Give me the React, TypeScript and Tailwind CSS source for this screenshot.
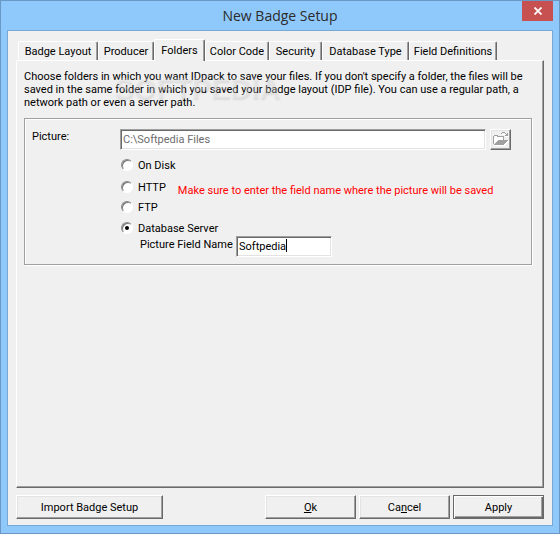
import { useState } from 'react'
import clsx from 'clsx'

const tabs = [
  { name: 'Badge Layout', width: 'w-[80px]' },
  { name: 'Producer', width: 'w-[56px]' },
  { name: 'Folders', width: 'w-[51px]' },
  { name: 'Color Code', width: 'w-[64px]' },
  { name: 'Security', width: 'w-[53px]' },
  { name: 'Database Type', width: 'w-[87px]' },
  { name: 'Field Definitions', width: 'w-[88px]' },
]

const raised =
  'border border-t-white border-l-white border-r-[#696969] border-b-[#696969] shadow-[inset_-1px_-1px_0_#a0a0a0,inset_1px_1px_0_#e3e3e3]'
const sunken =
  'bg-white border border-t-[#a0a0a0] border-l-[#a0a0a0] border-r-white border-b-white shadow-[inset_1px_1px_0_#696969,inset_-1px_-1px_0_#e3e3e3] outline-none'

function OpenFolderIcon() {
  return (
    <svg width="16" height="15" viewBox="0 0 16 15" shapeRendering="crispEdges" aria-hidden="true">
      <path d="M1 5h1V4h3v1h5v4H5v1H4v1H3v1H2v1H1z" fill="#fff" />
      <path d="M0 4h1V3h4v1h6v4h-1V5H4V4H1v8H0z" fill="#a0a0a0" />
      <path d="M5 8h10v1h-1v1h-1v1h-1v1h-1v1H1v-1h1v-1h1v-1h1V9h1z" fill="#a0a0a0" />
      <path d="M8 1h1V0h3v1h1v1h1V1h1v3h-3V3h1V2h-1V1H9v1H8z" fill="#a0a0a0" />
      <path d="M15 9h1v1h-1v1h-1v1h-1v1h-1v1H1v-1h10v-1h1v-1h1v-1h1V9zM9 2h3v1H9zM12 4h4v1h-4z" fill="#fff" />
    </svg>
  )
}

type RadioProps = {
  label: string
  value: string
  onChange: (value: string) => void
}

function SaveOption({ label, value, onChange }: RadioProps) {
  return (
    <label className="flex h-4 items-center gap-[5px]">
      <input
        type="radio"
        name="target"
        checked={value === label}
        onChange={() => onChange(label)}
        className="flex size-3 appearance-none items-center justify-center rounded-full border border-t-[#888] border-l-[#888] border-r-white border-b-white bg-white shadow-[inset_1px_1px_0_#777] checked:before:size-1 checked:before:rounded-full checked:before:bg-black"
      />
      <span>{label}</span>
    </label>
  )
}

export default function App() {
  const [active, setActive] = useState('Folders')
  const [target, setTarget] = useState('Database Server')
  const [field, setField] = useState('Softpedia')

  return (
    <div className="flex min-h-screen flex-col border border-[#6b98c4] bg-[#8fc8fb] px-[6px] pb-[7px] font-['Roboto','Liberation_Sans',sans-serif] text-[11px] leading-[13px] text-black">
      <header className="grid h-[29px] shrink-0 grid-cols-[1fr_auto_1fr]">
        <h1 className="col-start-2 self-center font-['Open_Sans','Noto_Sans',sans-serif] text-[14px] leading-5 text-[#2b2b2b]">
          New Badge Setup
        </h1>
        <button
          type="button"
          aria-label="Close"
          className="flex h-5 w-[31px] items-center justify-center justify-self-end bg-[#c75050]"
        >
          <svg width="8" height="8" viewBox="0 0 8 8" aria-hidden="true">
            <path d="M0.5 0.5l7 7M7.5 0.5l-7 7" stroke="#fff" strokeWidth="1.8" />
          </svg>
        </button>
      </header>

      <main className="flex grow flex-col border border-[#78a8d4] bg-[#f0f0f0] px-2 pt-2 pb-[6px]">
        <div role="tablist" className="flex items-end pl-[2px]">
          {tabs.map((tab) => (
            <button
              key={tab.name}
              type="button"
              role="tab"
              aria-selected={active === tab.name}
              onClick={() => setActive(tab.name)}
              className={clsx(
                'shrink-0 rounded-t-[2px] border-t border-l border-r border-t-white border-l-white border-r-[#696969] whitespace-nowrap shadow-[inset_-1px_0_0_#a0a0a0]',
                tab.width,
                active === tab.name ? 'z-10 -mb-px h-[22px] bg-[#f0f0f0] pb-px' : 'h-[19px] pt-px',
              )}
            >
              {tab.name}
            </button>
          ))}
        </div>

        <section
          role="tabpanel"
          className="grow border border-t-white border-l-white border-r-[#696969] border-b-[#696969] px-[7px] pt-[9px] shadow-[inset_-1px_-1px_0_#a0a0a0]"
        >
          <div className="relative">
            <p>
              Choose folders in which you want IDpack to save your files. If you don't specify a folder, the files will be
              saved in the same folder in which you saved your badge layout (IDP file). You can use a regular path, a
              network path or even a server path.
            </p>
            <span
              aria-hidden="true"
              className="pointer-events-none absolute top-1 left-[90px] font-['Liberation_Sans',sans-serif] text-[29px] leading-7 font-bold text-[#f5f5f5]/30 [text-shadow:1px_2px_2px_#00000016]"
            >
              SOFTPEDIA
            </span>
          </div>

          <div className="mt-[9px] mr-1 flex border border-[#a0a0a0] pt-[10px] pr-5 pb-[7px] pl-[7px] shadow-[1px_1px_0_#fff,inset_1px_1px_0_#fff]">
            <label htmlFor="path" className="w-[88px] shrink-0 pt-px">
              Picture:
            </label>
            <div className="min-w-0 grow">
              <div className="flex gap-1">
                <input
                  id="path"
                  type="text"
                  disabled
                  value="C:\Softpedia Files"
                  className={clsx(sunken, 'h-[21px] min-w-0 grow px-[2px] text-[#6d6d6d]')}
                />
                <button
                  type="button"
                  aria-label="Browse"
                  className={clsx(raised, 'flex size-[21px] shrink-0 items-center justify-center')}
                >
                  <OpenFolderIcon />
                </button>
              </div>

              <div className="mt-[7px] flex flex-col pl-px">
                <SaveOption label="On Disk" value={target} onChange={setTarget} />
                <div className="mt-[6px] flex gap-3">
                  <SaveOption label="HTTP" value={target} onChange={setTarget} />
                  <p className="pt-[5px] whitespace-nowrap text-[#f00]">
                    Make sure to enter the field name where the picture will be saved
                  </p>
                </div>
                <div className="mt-[2px]">
                  <SaveOption label="FTP" value={target} onChange={setTarget} />
                </div>
                <div className="mt-[5px]">
                  <SaveOption label="Database Server" value={target} onChange={setTarget} />
                </div>
              </div>

              <div className="flex pl-5">
                <label htmlFor="field" className="w-24 pt-[2px] whitespace-nowrap">
                  Picture Field Name
                </label>
                <div className="relative">
                  <input
                    id="field"
                    type="text"
                    value={field}
                    onChange={(e) => setField(e.target.value)}
                    className={clsx(sunken, 'peer h-[21px] w-24 px-[2px]')}
                  />
                  <span className="absolute top-[3px] left-[50px] h-[13px] w-px bg-black peer-focus:hidden" />
                </div>
              </div>
            </div>
          </div>
        </section>

        <footer className="mt-[7px] flex gap-[3px]">
          <button type="button" className={clsx(raised, 'mr-auto h-6 w-[147px]')}>
            Import Badge Setup
          </button>
          <button type="button" className={clsx(raised, 'h-6 w-[91px]')}>
            <u>O</u>k
          </button>
          <button type="button" className={clsx(raised, 'h-6 w-[91px]')}>
            Ca<u>n</u>cel
          </button>
          <button
            type="submit"
            className="h-6 w-[91px] border border-[#696969] shadow-[inset_1px_1px_0_#fff,inset_-1px_-1px_0_#696969,inset_-2px_-2px_0_#a0a0a0]"
          >
            Apply
          </button>
        </footer>
      </main>
    </div>
  )
}
